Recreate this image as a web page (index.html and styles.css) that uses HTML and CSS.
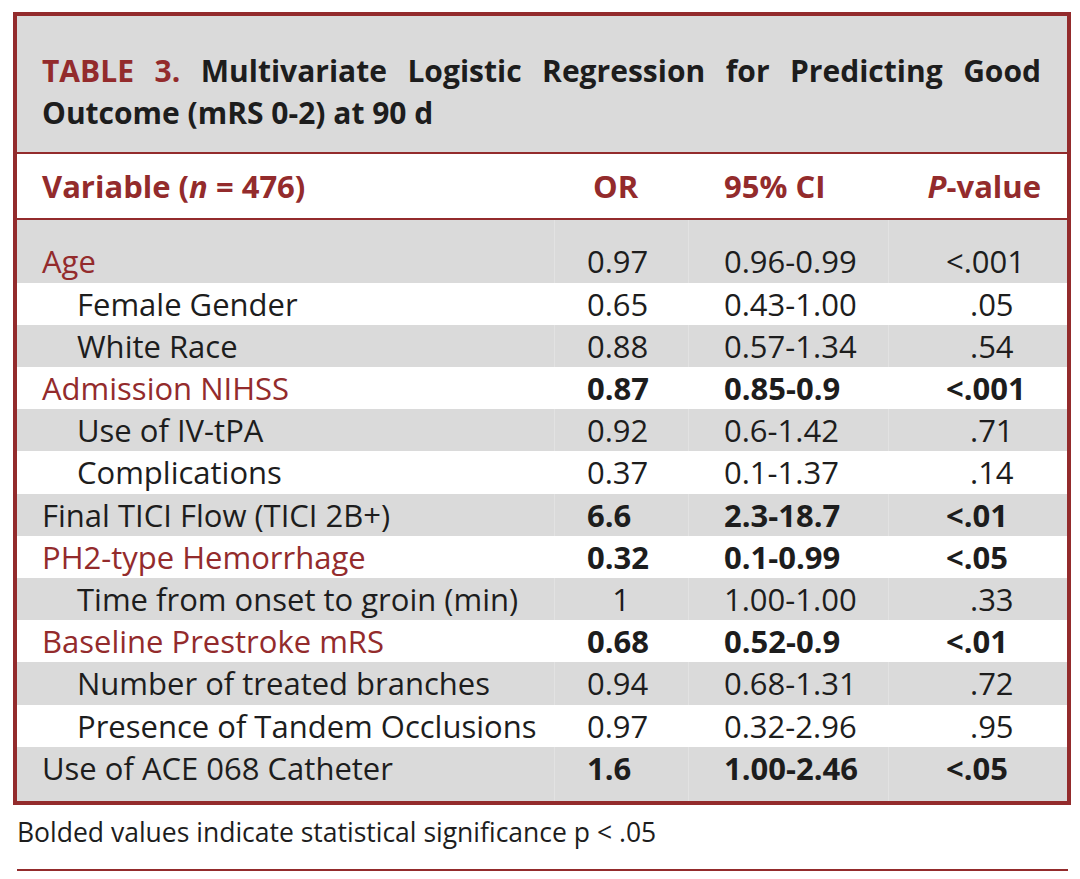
FILE: index.html
```html
<!DOCTYPE html>
<html lang="en">
<head>
<meta charset="utf-8">
<title>Table 3</title>
<link rel="stylesheet" href="styles.css">
</head>
<body>
<div class="frame">
  <div class="title">
    <span class="title-line justify"><span class="label">TABLE 3.</span> Multivariate Logistic Regression for Predicting Good</span>
    <span class="title-line">Outcome (mRS 0-2) at 90 d</span>
  </div>
  <table class="data">
    <colgroup>
      <col class="c-var">
      <col class="c-or">
      <col class="c-ci">
      <col class="c-p">
    </colgroup>
    <thead>
      <tr>
        <th class="var">Variable (<i>n</i> = 476)</th>
        <th class="or">OR</th>
        <th class="ci">95% CI</th>
        <th class="p"><i>P</i>-value</th>
      </tr>
    </thead>
    <tbody>
      <tr class="first">
        <td class="var red">Age</td><td class="or">0.97</td><td class="ci">0.96-0.99</td><td class="p">&lt;.001</td>
      </tr>
      <tr>
        <td class="var sub">Female Gender</td><td class="or">0.65</td><td class="ci">0.43-1.00</td><td class="p nolt">.05</td>
      </tr>
      <tr>
        <td class="var sub">White Race</td><td class="or">0.88</td><td class="ci">0.57-1.34</td><td class="p nolt">.54</td>
      </tr>
      <tr class="sig">
        <td class="var red">Admission NIHSS</td><td class="or">0.87</td><td class="ci">0.85-0.9</td><td class="p">&lt;.001</td>
      </tr>
      <tr>
        <td class="var sub">Use of IV-tPA</td><td class="or">0.92</td><td class="ci">0.6-1.42</td><td class="p nolt">.71</td>
      </tr>
      <tr>
        <td class="var sub">Complications</td><td class="or">0.37</td><td class="ci">0.1-1.37</td><td class="p nolt">.14</td>
      </tr>
      <tr class="sig">
        <td class="var">Final TICI Flow (TICI 2B+)</td><td class="or">6.6</td><td class="ci">2.3-18.7</td><td class="p">&lt;.01</td>
      </tr>
      <tr class="sig">
        <td class="var red">PH2-type Hemorrhage</td><td class="or">0.32</td><td class="ci">0.1-0.99</td><td class="p">&lt;.05</td>
      </tr>
      <tr>
        <td class="var sub">Time from onset to groin (min)</td><td class="or center">1</td><td class="ci">1.00-1.00</td><td class="p nolt">.33</td>
      </tr>
      <tr class="sig">
        <td class="var red">Baseline Prestroke mRS</td><td class="or">0.68</td><td class="ci">0.52-0.9</td><td class="p">&lt;.01</td>
      </tr>
      <tr>
        <td class="var sub">Number of treated branches</td><td class="or">0.94</td><td class="ci">0.68-1.31</td><td class="p nolt">.72</td>
      </tr>
      <tr>
        <td class="var sub">Presence of Tandem Occlusions</td><td class="or">0.97</td><td class="ci">0.32-2.96</td><td class="p nolt">.95</td>
      </tr>
      <tr class="sig last">
        <td class="var">Use of ACE 068 Catheter</td><td class="or">1.6</td><td class="ci">1.00-2.46</td><td class="p">&lt;.05</td>
      </tr>
    </tbody>
  </table>
</div>
<p class="note">Bolded values indicate statistical significance p &lt; .05</p>
<div class="rule"></div>
</body>
</html>
```
FILE: styles.css
```css
html, body {
  margin: 0;
  padding: 0;
  background: #ffffff;
}

body {
  font-family: "Open Sans", "Noto Sans", sans-serif;
  color: #1d1d1d;
}

.frame {
  box-sizing: border-box;
  width: 1058px;
  margin: 12px 0 0 13px;
  border: 4px solid #932b2c;
}

.title {
  background: #dadada;
  height: 138px;
  box-sizing: border-box;
  padding: 34px 26px 0 25px;
  border-bottom: 2px solid #932b2c;
  font-weight: 700;
  font-size: 30px;
  line-height: 42px;
  color: #1d1d1d;
}

.title-line {
  display: block;
  white-space: nowrap;
}

.title-line.justify {
  white-space: normal;
  text-align: justify;
  text-align-last: justify;
}

.title .label {
  color: #932b2c;
}

.data {
  width: 100%;
  table-layout: fixed;
  border-collapse: separate;
  border-spacing: 0;
  font-size: 31px;
}

.c-var { width: 537px; }
.c-or { width: 134px; }
.c-ci { width: 200px; }
.c-p { width: 179px; }

.data th {
  height: 66px;
  box-sizing: border-box;
  padding: 0;
  background: #ffffff;
  border-bottom: 2px solid #932b2c;
  color: #932b2c;
  font-weight: 700;
  text-align: left;
  line-height: 42px;
  vertical-align: middle;
  white-space: nowrap;
}

.data th.var { padding-left: 25px; }
.data th.or { padding-left: 39px; }
.data th.ci { padding-left: 36px; }
.data th.p {
  text-align: right;
  padding-right: 26px;
}

.data td {
  padding: 0;
  height: 42.2px;
  line-height: 42.2px;
  white-space: nowrap;
  vertical-align: middle;
  font-weight: 400;
}

.data tbody tr:nth-child(odd) td {
  background: #dadada;
}

.data tbody tr:nth-child(odd) td + td {
  box-shadow: inset 1px 0 0 #e2e2e2;
}

.data tr.first td {
  padding-top: 20.4px;
}

.data tr.last td {
  padding-bottom: 12.2px;
}

.data td.var { padding-left: 25px; }
.data td.var.sub { padding-left: 60px; }
.data td.red { color: #932b2c; }

.data td.or { padding-left: 33px; }
.data td.or.center {
  padding-left: 0;
  text-align: center;
}

.data td.ci { padding-left: 36px; }

.data td.p { padding-left: 58px; }
.data td.p.nolt { padding-left: 82px; }

.data tr.sig td.or,
.data tr.sig td.ci,
.data tr.sig td.p {
  font-weight: 700;
}

.note {
  margin: 12px 0 0 17px;
  font-size: 26.5px;
  line-height: 30px;
  color: #1d1d1d;
}

.rule {
  width: 1051px;
  height: 2px;
  margin: 22px 0 0 17px;
  background: #932b2c;
}
```
